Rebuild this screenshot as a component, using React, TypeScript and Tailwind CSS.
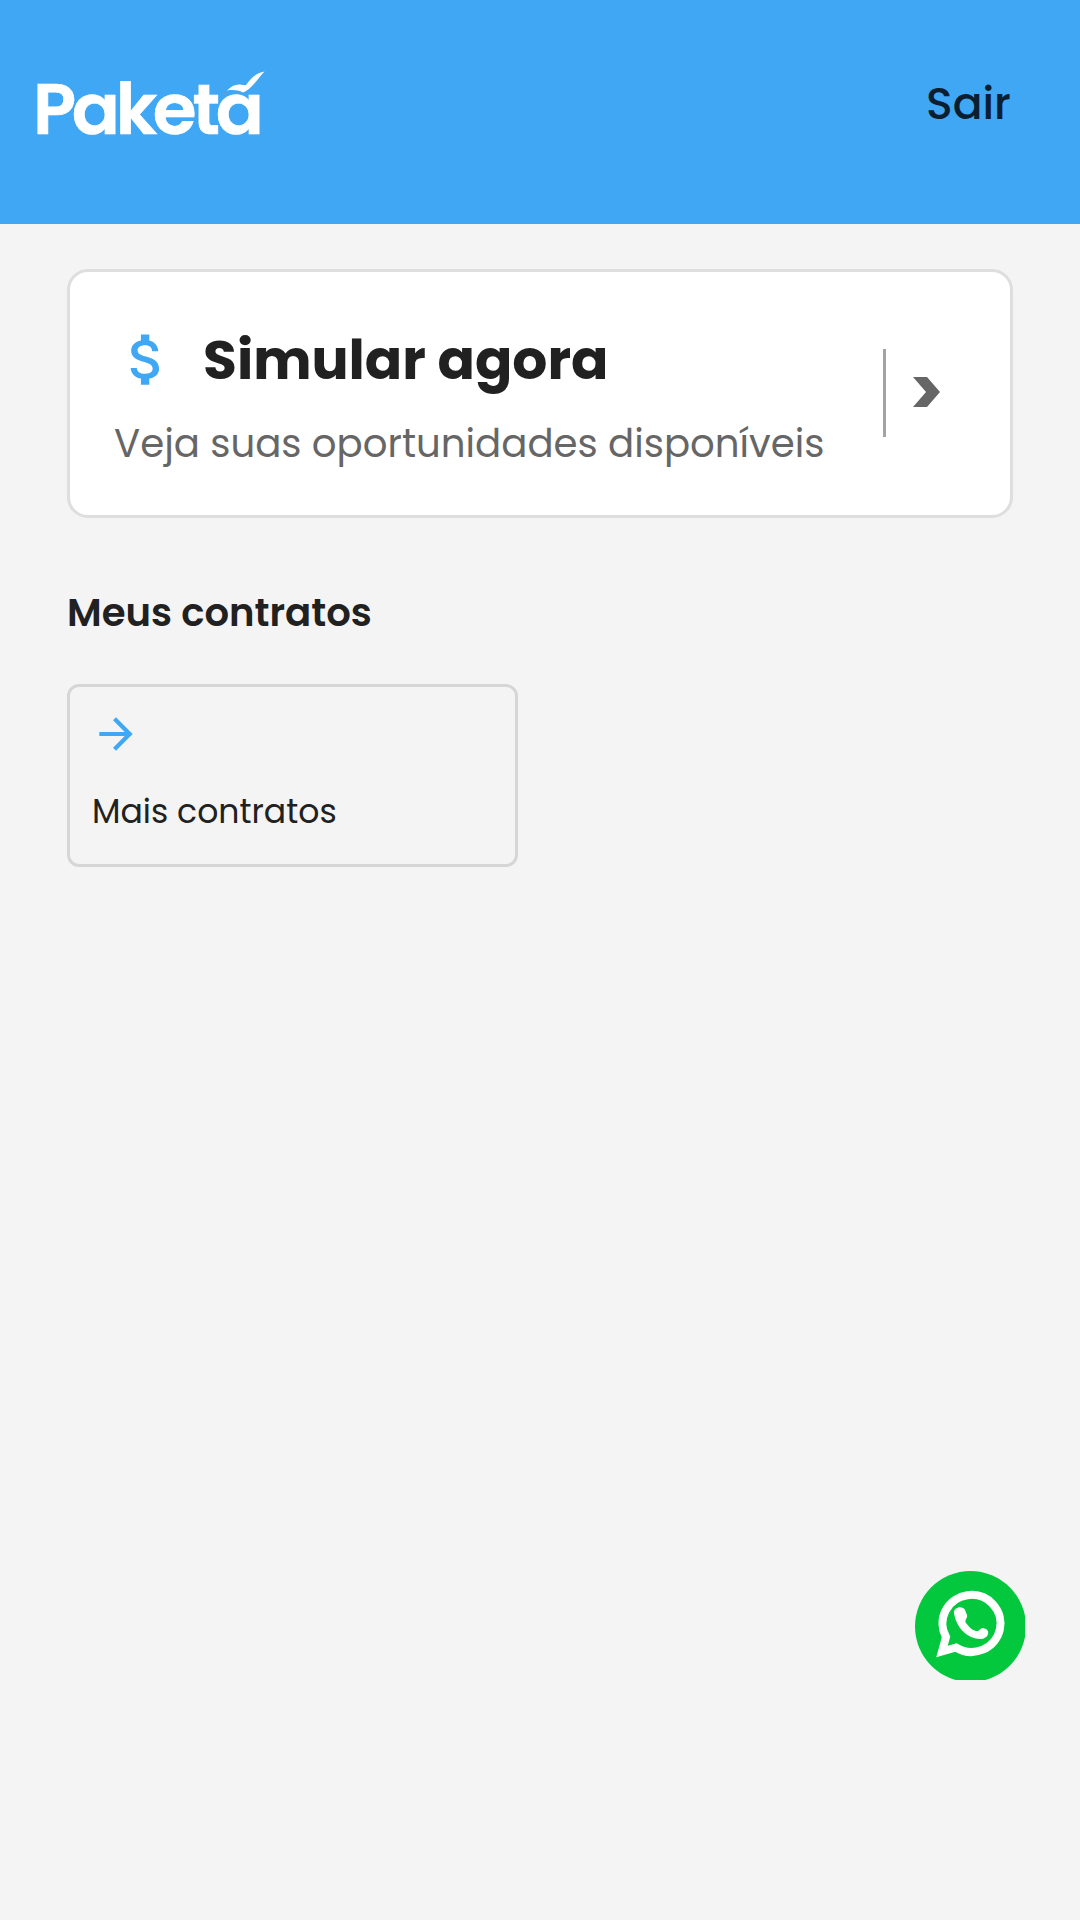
import { MdArrowForward, MdAttachMoney } from "react-icons/md";

function Logo() {
  return (
    <div className="relative h-[80px] w-[240px] text-white">
      <span className="text-[71px] leading-[80px] font-semibold tracking-[-4.3px] [-webkit-text-stroke:0.7px_#fff]">
        Paketa
      </span>
      {/* acento em forma de pássaro */}
      <svg className="absolute top-0 left-0 h-[80px] w-[240px] overflow-visible" viewBox="0 0 240 80">
        <path
          d="M194 21.500C198 17 203 15 207 15.500C210 15.800 212 16.500 213 16C218 9 223 4 231.500 2.500C227 7 224 12 219 17C215 21 212 23 210 23.500C205 21 200 20.500 194 21.500Z"
          fill="currentColor"
        />
      </svg>
    </div>
  );
}

function Header() {
  return (
    <header className="flex h-[223.500px] items-start justify-between bg-[#40a7f5] pt-[69px] pr-[69px] pl-[33px]">
      <Logo />
      <button className="mt-[5px] text-[44px] leading-[60px] font-medium text-[#0b1f30]">Sair</button>
    </header>
  );
}

function SimularCard() {
  return (
    <section className="flex h-[249px] items-start rounded-[21px] border-3 border-[#dedede] bg-white pt-[54px] pl-[43px]">
      <div className="w-[770px]">
        <div className="flex h-[68px] items-start">
          <MdAttachMoney className="size-[67px] shrink-0 text-[#40a7f5]" />
          <h1 className="ml-[23px] text-[55.100px] leading-[68px] font-bold whitespace-nowrap text-[#212121]">
            Simular agora
          </h1>
        </div>
        <p className="mt-[22px] ml-px text-[38.700px] leading-[56px] whitespace-nowrap text-[#666666]">
          Veja suas oportunidades disponíveis
        </p>
      </div>
      <div className="mt-[23px] flex h-[88px] items-center border-l-3 border-[#a3a3a3] pl-[27px]">
        <svg className="mb-[2px] h-[30px] w-[27px]" viewBox="0 0 27 30">
          <path d="M0 0H14L27 15L14 30H0L13 15Z" fill="#666666" />
        </svg>
      </div>
    </section>
  );
}

function Contratos() {
  return (
    <section className="mt-[67px]">
      <h2 className="text-[38.600px] leading-[56px] font-semibold text-[#212121]">Meus contratos</h2>
      <a
        href="#contratos"
        className="mt-[43px] flex h-[183px] w-[451px] flex-col items-start rounded-[12px] border-3 border-[#d6d6d6] pt-[22px] pl-[22px]"
      >
        <MdArrowForward className="-ml-px size-[50px] text-[#40a7f5]" />
        <span className="mt-[30px] text-[33.100px] leading-[46px] text-[#212121]">Mais contratos</span>
      </a>
    </section>
  );
}

function WhatsAppButton() {
  return (
    <button className="fixed top-[1571px] left-[915px]" aria-label="WhatsApp">
      <svg className="h-[109px] w-[110px]" viewBox="0 0 110 109">
        <circle cx="55.500" cy="55.500" r="55.500" fill="#03c83d" />
        {/* balão */}
        <path
          d="M27 80.500L31 66A29 28.500 0 1 1 41 76.500Z"
          fill="none"
          stroke="#fff"
          strokeWidth="8"
          strokeLinejoin="miter"
        />
        {/* fone */}
        <path
          d="M39 42C38 36 48 34 50 39L52 44C53 47 49 49 51 52C54 56 57 59 61 60C64 61 65 57 68 57L71 58C76 61 72 68 66 68C52 68 41 56 39 42Z"
          fill="#fff"
        />
      </svg>
    </button>
  );
}

export default function App() {
  return (
    <div className="min-h-screen bg-[#f4f4f4] font-['Poppins','Inter',sans-serif]">
      <Header />
      <main className="px-[67px] pt-[45.500px]">
        <SimularCard />
        <Contratos />
      </main>
      <WhatsAppButton />
    </div>
  );
}
